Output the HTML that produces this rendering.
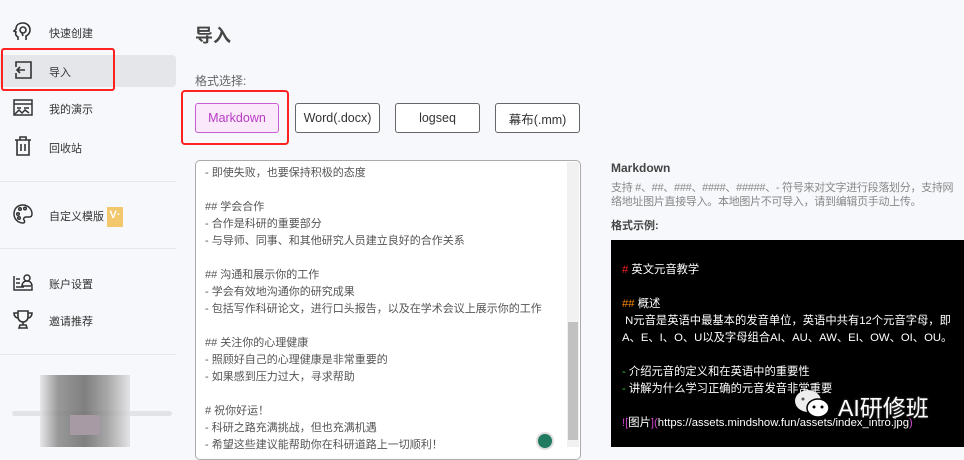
<!DOCTYPE html><html><head><meta charset="utf-8"><style>
*{margin:0;padding:0;box-sizing:border-box}
body{width:964px;height:447px;overflow:hidden;background:#f7f8fb;font-family:"Liberation Sans","Noto Sans CJK SC",sans-serif;position:relative;color:#333}
.a{position:absolute}
.nav{font-size:11px;color:#333;left:49px}
.ic{left:12px;width:22px;height:22px}
.div{left:0;width:176px;height:1px;background:#e6e7ea}
.btn{top:103px;height:30px;border:1px solid #666;border-radius:3px;font-size:12.5px;display:flex;align-items:center;justify-content:center;background:#fff;color:#333}
.ta{font-size:11px;color:#555;line-height:17px;left:205px;white-space:pre}
.bk{font-size:11.3px;color:#fff;line-height:17px;left:622px;white-space:pre}
</style></head><body>
<div class="a" style="left:0;top:55px;width:176px;height:32px;background:#e5e6ea;border-radius:0 4px 4px 0"></div>
<div class="a" style="left:1px;top:48px;width:114px;height:43px;border:2px solid #f22;border-radius:3px"></div>
<svg class="a ic" style="top:21px" viewBox="0 0 22 22" fill="none" stroke="#333" stroke-width="1.6"><path d="M6 19v-3c-2-1-3-3-2-5l-2-1 2-2c0-4 3-6 7-6 4 0 7 3 7 7 0 3-2 5-4 6v4"/><circle cx="11" cy="9" r="3"/><path d="M10 12l1 3"/></svg>
<div class="a nav" style="top:25px">快速创建</div>
<svg class="a ic" style="top:59px" viewBox="0 0 22 22" fill="none" stroke="#333" stroke-width="1.6"><path d="M4 8V3h15v16H4v-5"/><path d="M13 11H5M8 8l-3 3 3 3"/></svg>
<div class="a nav" style="top:64px">导入</div>
<svg class="a ic" style="top:97px" viewBox="0 0 22 22" fill="none" stroke="#333" stroke-width="1.5"><rect x="2" y="3" width="18" height="15"/><path d="M2 7h18M5 11h4M12 11h5M3 17l4-4 3 3 3-3 4 3"/></svg>
<div class="a nav" style="top:101px">我的演示</div>
<svg class="a ic" style="top:135px" viewBox="0 0 22 22" fill="none" stroke="#333" stroke-width="1.6"><path d="M3 5h16M8 5V2h6v3M5 5v15h12V5M9 9v7M13 9v7"/></svg>
<div class="a nav" style="top:140px">回收站</div>
<div class="a div" style="top:181px"></div>
<svg class="a ic" style="top:203px" viewBox="0 0 22 22" fill="none" stroke="#333" stroke-width="1.5"><path d="M11 2C5 2 2 6 2 11s4 9 9 9c2 0 2-2 1-3s0-3 2-3h3c2 0 3-1 3-3 0-5-4-9-9-9z"/><circle cx="6" cy="11" r="1.3"/><circle cx="8" cy="6" r="1.3"/><circle cx="13" cy="5.5" r="1.3"/><circle cx="7" cy="15" r="1.3"/></svg>
<div class="a nav" style="top:208px">自定义模版</div>
<div class="a" style="left:107px;top:207px;width:16px;height:20px;background:#f3c76b;color:#fff;font-size:11px;font-weight:bold;text-align:center;line-height:16px">V·</div>
<div class="a div" style="top:248px"></div>
<svg class="a ic" style="top:271px" viewBox="0 0 22 22" fill="none" stroke="#333" stroke-width="1.5"><path d="M2 5v14h18v-3M4 8h4M4 12h4M4 16h8"/><circle cx="15" cy="7" r="3"/><path d="M10 15c0-3 2-5 5-5s5 2 5 5z"/></svg>
<div class="a nav" style="top:276px">账户设置</div>
<svg class="a ic" style="top:308px" viewBox="0 0 22 22" fill="none" stroke="#333" stroke-width="1.6"><path d="M6 3h10v6a5 5 0 01-10 0zM6 5H2c0 3 2 5 4 5M16 5h4c0 3-2 5-4 5M11 14v3M7 20h8l-1-3H8z"/></svg>
<div class="a nav" style="top:313px">邀请推荐</div>
<div class="a div" style="top:354px"></div>
<div class="a" style="left:12px;top:411px;width:160px;height:5px;background:#e2e3e6;border-radius:3px"></div>
<div class="a" style="left:40px;top:375px;width:90px;height:72px;background:linear-gradient(90deg,#e4e4e6,#888 20%,#6a6a6a 50%,#9a9a9a 75%,#e0e0e2);opacity:.85"></div>
<div class="a" style="left:70px;top:415px;width:30px;height:20px;background:#a89aa4"></div>

<div class="a" style="left:195px;top:22px;font-size:18px;font-weight:bold;color:#444">导入</div>
<div class="a" style="left:195px;top:72px;font-size:12px;color:#666">格式选择:</div>
<div class="a" style="left:181px;top:90px;width:108px;height:55px;border:2px solid #f22;border-radius:4px"></div>
<div class="a btn" style="left:195px;width:84px;background:#fbe8fb;border-color:#c75cd4;color:#b73bc4">Markdown</div>
<div class="a btn" style="left:295px;width:85px">Word(.docx)</div>
<div class="a btn" style="left:395px;width:85px">logseq</div>
<div class="a btn" style="left:495px;width:85px">幕布(.mm)</div>

<div class="a" style="left:195px;top:160px;width:386px;height:300px;background:#fff;border:1px solid #aaa;border-radius:5px"></div>
<div class="a" style="left:567px;top:162px;width:12px;height:285px;background:#f1f1f1"></div>
<div class="a" style="left:568px;top:322px;width:10px;height:118px;background:#c1c1c1"></div>
<div class="a ta" style="top:165px">- 即使失败，也要保持积极的态度

## 学会合作
- 合作是科研的重要部分
- 与导师、同事、和其他研究人员建立良好的合作关系

## 沟通和展示你的工作
- 学会有效地沟通你的研究成果
- 包括写作科研论文，进行口头报告，以及在学术会议上展示你的工作

## 关注你的心理健康
- 照顾好自己的心理健康是非常重要的
- 如果感到压力过大，寻求帮助

# 祝你好运！
- 科研之路充满挑战，但也充满机遇
- 希望这些建议能帮助你在科研道路上一切顺利！</div>
<div class="a" style="left:536px;top:432px;width:18px;height:18px;border-radius:50%;background:#1f7a5f;border:2px solid #ddd"></div>

<div class="a" style="left:611px;top:161px;font-size:12px;font-weight:bold;color:#444">Markdown</div>
<div class="a" style="left:611px;top:181px;font-size:11px;color:#888;line-height:14px;width:352px;letter-spacing:-0.3px">支持 #、##、###、####、#####、- 符号来对文字进行段落划分，支持网络地址图片直接导入。本地图片不可导入，请到编辑页手动上传。</div>
<div class="a" style="left:611px;top:217px;font-size:11px;font-weight:bold;color:#444">格式示例:</div>
<div class="a" style="left:611px;top:240px;width:353px;height:207px;background:#000"></div>
<div class="a bk" style="top:262px"><span style="color:#f22">#</span> 英文元音教学

<span style="color:#f80">##</span> 概述
 N元音是英语中最基本的发音单位，英语中共有12个元音字母，即
A、E、I、O、U以及字母组合AI、AU、AW、EI、OW、OI、OU。

<span style="color:#3c3">-</span> 介绍元音的定义和在英语中的重要性
<span style="color:#3c3">-</span> 讲解为什么学习正确的元音发音非常重要

<span style="color:#c4c">![</span>图片<span style="color:#c4c">](</span>https://assets.mindshow.fun/assets/index_intro.jpg<span style="color:#c4c">)</span></div>
<svg class="a" style="left:793px;top:388px" width="40" height="32" viewBox="0 0 40 32"><ellipse cx="15" cy="13" rx="13" ry="11" fill="#eee"/><ellipse cx="25" cy="20" rx="11" ry="9" fill="#fff" stroke="#000" stroke-width="1.5"/><circle cx="21" cy="19" r="1.5" fill="#000"/><circle cx="29" cy="19" r="1.5" fill="#000"/><circle cx="10" cy="11" r="1.5" fill="#555"/></svg>
<div class="a" style="left:838px;top:389px;font-size:23px;color:#fff;text-shadow:0 0 2px #555">AI研修班</div>
</body></html>
